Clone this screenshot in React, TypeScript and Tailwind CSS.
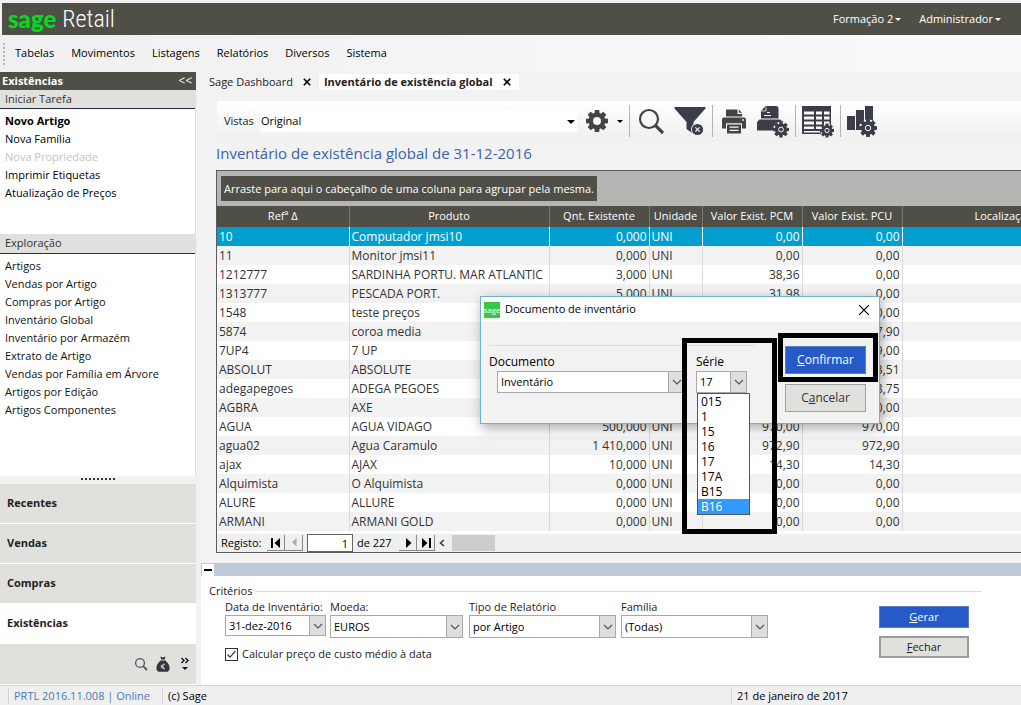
import React, { useState } from 'react';

type Linha = {
  ref: string;
  produto: string;
  qnt: string;
  pcm: string;
  pcu: string;
};

const menus = ['Tabelas', 'Movimentos', 'Listagens', 'Relatórios', 'Diversos', 'Sistema'];

const tarefas = ['Novo Artigo', 'Nova Família', 'Nova Propriedade', 'Imprimir Etiquetas', 'Atualização de Preços'];

const exploracao = [
  'Artigos',
  'Vendas por Artigo',
  'Compras por Artigo',
  'Inventário Global',
  'Inventário por Armazém',
  'Extrato de Artigo',
  'Vendas por Família em Árvore',
  'Artigos por Edição',
  'Artigos Componentes',
];

const modulos = ['Recentes', 'Vendas', 'Compras', 'Existências'];

const series = ['015', '1', '15', '16', '17', '17A', 'B15', 'B16'];

const linhas: Linha[] = [
  { ref: '10', produto: 'Computador jmsi10', qnt: '0,000', pcm: '0,00', pcu: '0,00' },
  { ref: '11', produto: 'Monitor jmsi11', qnt: '0,000', pcm: '0,00', pcu: '0,00' },
  { ref: '1212777', produto: 'SARDINHA PORTU. MAR ATLANTIC', qnt: '3,000', pcm: '38,36', pcu: '0,00' },
  { ref: '1313777', produto: 'PESCADA PORT.', qnt: '5,000', pcm: '31,98', pcu: '0,00' },
  { ref: '1548', produto: 'teste preços', qnt: '0,000', pcm: '0,00', pcu: '0,00' },
  { ref: '5874', produto: 'coroa media', qnt: '10,000', pcm: '7,90', pcu: '7,90' },
  { ref: '7UP4', produto: '7 UP', qnt: '10,000', pcm: '9,00', pcu: '9,00' },
  { ref: 'ABSOLUT', produto: 'ABSOLUTE', qnt: '1,000', pcm: '3,51', pcu: '3,51' },
  { ref: 'adegapegoes', produto: 'ADEGA PEGOES', qnt: '5,000', pcm: '8,75', pcu: '8,75' },
  { ref: 'AGBRA', produto: 'AXE', qnt: '0,000', pcm: '0,00', pcu: '0,00' },
  { ref: 'AGUA', produto: 'AGUA VIDAGO', qnt: '500,000', pcm: '970,00', pcu: '970,00' },
  { ref: 'agua02', produto: 'Agua Caramulo', qnt: '1 410,000', pcm: '972,90', pcu: '972,90' },
  { ref: 'ajax', produto: 'AJAX', qnt: '10,000', pcm: '14,30', pcu: '14,30' },
  { ref: 'Alquimista', produto: 'O Alquimista', qnt: '0,000', pcm: '0,00', pcu: '0,00' },
  { ref: 'ALURE', produto: 'ALLURE', qnt: '0,000', pcm: '0,00', pcu: '0,00' },
  { ref: 'ARMANI', produto: 'ARMANI GOLD', qnt: '0,000', pcm: '0,00', pcu: '0,00' },
];

const dentes = [0, 45, 90, 135, 180, 225, 270, 315];

// Roda dentada de 8 dentes
const Gear = ({ cx, cy, r, hole, fill, edge }: { cx: number; cy: number; r: number; hole: string; fill: string; edge?: string }) => (
  <g transform={`translate(${cx} ${cy})`}>
    {edge && <circle r={r * 0.98} fill={edge} />}
    {dentes.map((a) => (
      <path key={a} d="M-2.6 -7 L-2.2 -11 H2.2 L2.6 -7 Z" transform={`rotate(${a}) scale(${r / 11})`} fill={fill} />
    ))}
    <circle r={r * 0.76} fill={fill} />
    {edge ? <circle r={r * 0.3} fill="none" stroke={hole} strokeWidth="1" /> : <circle r={r * 0.36} fill={hole} />}
  </g>
);

const Caret = ({ className }: { className?: string }) => (
  <svg viewBox="0 0 8 4" className={className} fill="currentColor"><path d="M0 0H8L4 4Z" /></svg>
);

const Fechar = ({ className }: { className?: string }) => (
  <svg viewBox="0 0 10 10" className={className} stroke="currentColor" fill="none"><path d="M1 1L9 9M9 1L1 9" /></svg>
);

const Combo = ({ id, value, className }: { id: string; value: string; className: string }) => (
  <div className={`relative border border-[#a8a8a8] bg-white ${className}`}>
    <select id={id} className="block h-full w-full appearance-none bg-transparent pr-4 pl-[3px] text-[11px] text-black outline-none">
      <option>{value}</option>
    </select>
    <span className="pointer-events-none absolute inset-y-0 right-0 flex w-4 items-center justify-center border-l border-[#a8a8a8] bg-[#dedede]">
      <svg viewBox="0 0 10 6" className="w-2.5" fill="none" stroke="#555" strokeWidth="1.2"><path d="M1 1L5 5L9 1" /></svg>
    </span>
  </div>
);

const Separador = () => <span className="h-8 w-px bg-[#b4b4b4]" />;

const Sidebar = () => (
  <aside className="flex w-[196px] shrink-0 flex-col bg-white">
    <div className="flex h-[18px] items-center justify-between bg-[#504f47] px-0.5 font-bold text-white">
      <h2>Existências</h2>
      <button type="button" aria-label="Recolher" className="pr-0.5 text-xs font-normal">&lt;&lt;</button>
    </div>
    <div className="flex grow flex-col border-r border-[#dcdcdc]">
      <h3 className="flex h-[19px] items-center border-b border-[#1f2a44] bg-[#e0e0dd] px-[5px] text-[#333]">Iniciar Tarefa</h3>
      <ul className="px-[5px] pt-[3px] pb-8">
        {tarefas.map((t, i) => (
          <li key={t}>
            <a href="#" className={`block leading-[18px] ${i === 0 ? 'font-bold' : ''} ${i === 2 ? 'text-[#c4c4c4]' : 'text-black'}`}>{t}</a>
          </li>
        ))}
      </ul>
      <h3 className="flex h-5 items-center border-b border-[#1f3270] bg-[#e0e0dd] px-[5px] text-[#333]">Exploração</h3>
      <ul className="px-[5px] pt-[3px]">
        {exploracao.map((t) => (
          <li key={t}>
            <a href="#" className="block leading-[18px] text-[#111]">{t}</a>
          </li>
        ))}
      </ul>
    </div>
    <div className="flex h-2 justify-center bg-[#f2f2f2] pt-0.5">
      <span className="h-0.5 w-[35px] bg-[repeating-linear-gradient(90deg,#333_0_2px,transparent_2px_4px)]" />
    </div>
    <nav className="flex flex-col">
      {modulos.map((m) => (
        <button
          key={m}
          type="button"
          className={`h-10 border-b border-white px-[7px] text-left font-bold text-[#222] ${m === 'Existências' ? 'bg-white' : 'bg-[#e0e0dd]'}`}
        >
          {m}
        </button>
      ))}
    </nav>
    <div className="flex h-[41px] items-center justify-end gap-2 border-b border-white bg-[#e0e0dd] pr-1.5">
      <svg viewBox="0 0 14 14" className="w-3.5" fill="none" stroke="#555" strokeWidth="1.3"><circle cx="6" cy="6" r="4.4" /><path d="M9.2 9.2L13 13" strokeWidth="1.8" /></svg>
      <svg viewBox="0 0 14 16" className="w-3.5" fill="#33343f">
        <path d="M4.5 0.5L7 1.5L9.5 0.5L8.8 3.6H5.2Z" />
        <path d="M4.8 4.6H9.2C11 6 13.6 9 13.6 12C13.6 15 12 15.8 10 15.8H4C2 15.8 0.4 15 0.4 12C0.4 9 3 6 4.8 4.6Z" />
        <path d="M9 8.4C7.6 7.6 5.8 8.4 5.8 10.5C5.8 12.6 7.6 13.4 9 12.6M4.8 9.9H8M4.8 11.2H8" fill="none" stroke="#e0e0dd" strokeWidth="0.9" />
      </svg>
      <svg viewBox="0 0 10 14" className="ml-0.5 w-2.5" fill="none" stroke="#111" strokeWidth="1.4"><path d="M1.5 1L4 3.5L1.5 6M5.5 1L8 3.5L5.5 6" /><path d="M2 10H8L5 13Z" fill="#111" stroke="none" /></svg>
    </div>
  </aside>
);

const Toolbar = () => (
  <div className="ml-4 flex h-10 items-center bg-linear-to-b from-white to-[#efefef] pl-[7px] text-[#3a3c47]">
    <label htmlFor="vistas" className="w-9 shrink-0 text-[#222]">Vistas</label>
    <div className="relative w-[317px]">
      <select id="vistas" className="block h-[22px] w-full appearance-none bg-white pl-px text-[11px] text-black outline-none">
        <option>Original</option>
      </select>
      <Caret className="pointer-events-none absolute top-2.5 right-0.5 w-2 text-black" />
    </div>
    <button type="button" aria-label="Opções" className="ml-2 flex items-center gap-2">
      <svg viewBox="0 0 24 24" className="w-6"><Gear cx={12} cy={12} r={11} hole="#f8f8f8" fill="#444" /></svg>
      <Caret className="w-1.5 text-black" />
    </button>
    <div className="ml-1.5 flex items-center gap-1.5">
      <Separador />
      <div className="flex items-center gap-2.5">
        <button type="button" aria-label="Pesquisar">
          <svg viewBox="0 0 28 32" className="h-8 w-7" fill="none" stroke="#444"><circle cx="13" cy="14" r="9" strokeWidth="2.2" /><path d="M19.6 20.6L27 28" strokeWidth="3.2" /></svg>
        </button>
        <button type="button" aria-label="Limpar filtro">
          <svg viewBox="0 0 32 32" className="w-8">
            <path d="M0.5 2H31.5V3.5L19.5 17V29L12.5 24V17L0.5 3.5Z" fill="#3b3d49" />
            <circle cx="23.5" cy="24.5" r="6.5" fill="#f6f6f6" />
            <circle cx="23.5" cy="24.5" r="5.6" fill="#3b3d49" />
            <path d="M21.4 22.4L25.6 26.6M25.6 22.4L21.4 26.6" stroke="#f6f6f6" strokeWidth="1.2" />
          </svg>
        </button>
      </div>
      <Separador />
      <div className="flex items-center gap-2.5">
        <button type="button" aria-label="Imprimir">
          <svg viewBox="-2 0 28 32" className="h-8 w-7" fill="#444">
            <path d="M5 4.5H16.5V9H21V11.5H5Z" /><path d="M17.8 4.5L21 7.7H17.8Z" />
            <path d="M3 12.6H23Q25 12.6 25 14.6V23.5H21V18.2H5V23.5H1V14.6Q1 12.6 3 12.6Z" />
            <circle cx="22" cy="15" r="0.9" fill="#f6f6f6" />
            <path d="M6 19.5H20V28.5H6Z" /><path d="M8.5 22.2H17.5M8.5 25.4H17.5" stroke="#f6f6f6" strokeWidth="1.2" />
          </svg>
        </button>
        <button type="button" aria-label="Configurar impressão">
          <svg viewBox="0 0 32 34" className="h-[34px] w-8" fill="#3b3d49">
            <path d="M8.5 2H19Q21.5 2 21.5 5V14.5H4V7Z" />
            <path d="M4.5 7H9V2.5" fill="none" stroke="#f6f6f6" strokeWidth="0.8" />
            <path d="M10 8.5H13M7 11.5H14" stroke="#f6f6f6" strokeWidth="1.2" />
            <path d="M2.5 15.5H23L26.5 18V26.5H0V18Z" />
            <Gear cx={24} cy={25.5} r={8} fill="#3b3d49" hole="#f6f6f6" edge="#f6f6f6" />
          </svg>
        </button>
      </div>
      <Separador />
      <button type="button" aria-label="Configurar grelha">
        <svg viewBox="0 0 32 34" className="h-[34px] w-8">
          <path d="M0 2H29V30H0Z" fill="#3b3d49" />
          <path d="M2 7.5H12V10.5H2ZM14 7.5H20V10.5H14ZM22 7.5H27.5V10.5H22ZM2 12.5H12V15.5H2ZM14 12.5H20V15.5H14ZM22 12.5H27.5V15.5H22ZM2 17.5H12V20.5H2ZM14 17.5H20V20.5H14ZM22 17.5H27.5V20.5H22ZM2 22.5H12V25H2ZM14 22.5H20V25H14ZM2 27H18V28.5H2Z" fill="#fafafa" />
          <Gear cx={25} cy={26.5} r={7} fill="#3b3d49" hole="#f6f6f6" edge="#f6f6f6" />
        </svg>
      </button>
      <Separador />
      <button type="button" aria-label="Configurar gráfico">
        <svg viewBox="0 0 32 34" className="h-[34px] w-8" fill="#3b3d49">
          <path d="M0 12H8V26H0ZM9 6H17V26H9ZM18 2H26V26H18Z" />
          <Gear cx={21} cy={24} r={9} fill="#3b3d49" hole="#f6f6f6" edge="#f6f6f6" />
        </svg>
      </button>
    </div>
  </div>
);

const Grelha = ({ selecionada, onSelect }: { selecionada: number; onSelect: (i: number) => void }) => (
  <div className="ml-[15px] overflow-hidden border-y border-l border-[#5a5a5a] bg-white">
    <div className="flex h-[35px] items-center bg-[#b5b5b3] px-1">
      <p className="bg-[#504f47] px-[3px] leading-[25px] text-white">
        Arraste para aqui o cabeçalho de uma coluna para agrupar pela mesma.
      </p>
    </div>
    <table className="w-full min-w-[889px] table-fixed border-collapse">
      <colgroup>
        <col className="w-[132px]" />
        <col className="w-[200px]" />
        <col className="w-[100px]" />
        <col className="w-[53px]" />
        <col className="w-[100px]" />
        <col className="w-[100px]" />
        <col />
      </colgroup>
      <thead>
        <tr className="h-[21px] bg-[#504f47] text-white *:border-r *:border-[#77766e] *:p-0 *:font-normal">
          <th>Refª Δ</th>
          <th>Produto</th>
          <th>Qnt. Existente</th>
          <th>Unidade</th>
          <th>Valor Exist. PCM</th>
          <th>Valor Exist. PCU</th>
          <th>Localização</th>
        </tr>
      </thead>
      <tbody className="text-xs">
        {linhas.map((l, i) => (
          <tr
            key={l.ref}
            onClick={() => onSelect(i)}
            className={`h-[19px] *:border-r *:px-0.5 *:py-0 *:leading-[18px] *:whitespace-nowrap ${
              i === selecionada ? 'bg-[#009fcf] text-white *:border-white' : 'text-[#333] even:bg-[#f2f2f2] *:border-[#dadada]'
            }`}
          >
            <td>{l.ref}</td>
            <td>{l.produto}</td>
            <td className="text-right">{l.qnt}</td>
            <td>UNI</td>
            <td className="text-right">{l.pcm}</td>
            <td className="text-right">{l.pcu}</td>
            <td></td>
          </tr>
        ))}
      </tbody>
    </table>
    <div className="mt-[3px] flex h-[18px] items-center bg-[#efefef] pl-1 text-black">
      <label htmlFor="registo" className="w-[46px]">Registo:</label>
      <button type="button" aria-label="Primeiro" className="flex h-4 w-[18px] items-center justify-center border-r border-b border-[#888]">
        <svg viewBox="0 0 12 10" className="w-3"><path d="M1 0H3V10H1ZM10 0V10L4.5 5Z" /></svg>
      </button>
      <button type="button" aria-label="Anterior" className="flex h-4 w-[18px] items-center justify-center border-r border-b border-[#888]">
        <svg viewBox="0 0 12 10" className="w-2.5" fill="#aaa"><path d="M9 0V10L3.5 5Z" /></svg>
      </button>
      <input id="registo" defaultValue="1" className="ml-1 h-[18px] w-[46px] border border-[#666] bg-white px-1 text-right outline-none" />
      <span className="w-[46px] pl-1">de 227</span>
      <button type="button" aria-label="Seguinte" className="flex h-4 w-[18px] items-center justify-center border-r border-b border-[#888]">
        <svg viewBox="0 0 12 10" className="w-3"><path d="M4 0V10L9.5 5Z" /></svg>
      </button>
      <button type="button" aria-label="Último" className="flex h-4 w-[18px] items-center justify-center border-r border-b border-[#888]">
        <svg viewBox="0 0 12 10" className="w-3"><path d="M9 0H11V10H9ZM2 0V10L7.5 5Z" /></svg>
      </button>
      <svg viewBox="0 0 6 8" className="ml-1 w-1.5" fill="none" stroke="#333" strokeWidth="1.5"><path d="M5 1L1.5 4L5 7" /></svg>
      <span className="ml-[7px] h-4 w-[43px] bg-[#cdcdcd]" />
    </div>
  </div>
);

const Criterios = () => {
  const [calcular, setCalcular] = useState(true);
  return (
    <form className="flex grow flex-col bg-white px-2 pt-[7px] pb-5 leading-4" onSubmit={(e) => e.preventDefault()}>
      <div className="mr-[31px] flex items-center gap-1">
        <h2>Critérios</h2>
        <span className="h-px grow bg-[#dcdcdc]" />
      </div>
      <div className="flex items-start pl-4">
        <div className="flex flex-col items-start gap-2">
          <div className="flex items-start">
            <div className="w-[105px]">
              <label htmlFor="data" className="block whitespace-nowrap">Data de Inventário:</label>
              <Combo id="data" value="31-dez-2016" className="h-[21px] w-[101px]" />
            </div>
            <div className="w-[139px]">
              <label htmlFor="moeda" className="block">Moeda:</label>
              <Combo id="moeda" value="EUROS" className="h-[23px] w-[133px]" />
            </div>
            <div className="w-[152px]">
              <label htmlFor="tipo" className="block">Tipo de Relatório</label>
              <Combo id="tipo" value="por Artigo" className="h-[23px] w-[147px]" />
            </div>
            <div>
              <label htmlFor="familia" className="block">Família</label>
              <Combo id="familia" value="(Todas)" className="h-[23px] w-[147px]" />
            </div>
          </div>
          <label className="flex items-center gap-1">
            <span className="relative flex size-[13px]">
              <input
                type="checkbox"
                checked={calcular}
                onChange={(e) => setCalcular(e.target.checked)}
                className="size-[13px] appearance-none border border-[#333] bg-white"
              />
              {calcular && (
                <svg viewBox="0 0 13 13" className="pointer-events-none absolute inset-0" fill="none" stroke="#333" strokeWidth="1.2"><path d="M2.5 6.5L5 9.2L10.5 3.2" /></svg>
              )}
            </span>
            Calcular preço de custo médio à data
          </label>
        </div>
        <div className="mr-11 ml-auto flex w-[90px] flex-col gap-2 pt-[7px]">
          <button type="submit" className="h-[22px] border border-[#5a7fc0] bg-[#255ac8] text-white"><u>G</u>erar</button>
          <button type="button" className="h-[22px] border-2 border-[#9c9c9a] bg-[#e0e0dd] text-[#222]"><u>F</u>echar</button>
        </div>
      </div>
    </form>
  );
};

const DocumentoDialog = () => {
  const [serie, setSerie] = useState('B16');
  return (
    <div role="dialog" aria-label="Documento de inventário" className="absolute top-[296px] left-[480px] h-32 w-[400px] border border-[#6db3cc] bg-[#f2f2f2] shadow-[2px_4px_12px_rgba(0,0,0,0.35)]">
      <div className="flex h-[25px] items-center bg-white pr-[9px] pl-[3px] text-black">
        <span className="flex size-4 items-center justify-center overflow-hidden bg-[#35c843] text-[8px] leading-none text-white">sage</span>
        <h2 className="pl-[5px]">Documento de inventário</h2>
        <button type="button" aria-label="Fechar" className="ml-auto"><Fechar className="w-3" /></button>
      </div>
      <div className="mx-2 mt-[23px] w-[266px] border-t border-[#dcdcdc]" />
      <div className="flex pt-2 pl-2 text-xs text-black">
        <div className="w-[207px]">
          <label htmlFor="documento" className="block leading-4">Documento</label>
          <Combo id="documento" value="Inventário" className="mt-px ml-2 h-[22px] w-[188px]" />
        </div>
        <div className="w-[51px]">
          <label htmlFor="serie" className="block leading-4">Série</label>
          <Combo id="serie" value="17" className="mt-px h-[22px]" />
        </div>
      </div>
      <ul role="listbox" aria-label="Série" className="absolute top-24 left-[216px] w-[53px] border border-[#555] bg-white text-xs text-black">
        {series.map((s) => (
          <li
            key={s}
            role="option"
            aria-selected={s === serie}
            onClick={() => setSerie(s)}
            className={`px-[3px] leading-[15px] ${s === serie ? 'bg-[#3399ff] text-white' : ''}`}
          >
            {s}
          </li>
        ))}
      </ul>
      <div className="absolute top-[49px] right-[13px] flex w-[81px] flex-col gap-2.5 text-xs">
        <button type="button" className="h-7 border border-[#5a7fc0] bg-[#255ac8] text-white"><u>C</u>onfirmar</button>
        <button type="button" className="h-7 border border-[#a0a09e] bg-[#e0e0dd] text-[#333]">C<u>a</u>ncelar</button>
      </div>
      {/* Realces */}
      <div className="pointer-events-none absolute top-[41px] left-[201px] h-[196px] w-[95px] border-5 border-black" />
      <div className="pointer-events-none absolute top-9 left-[297px] h-[49px] w-[100px] border-5 border-black" />
    </div>
  );
};

const App = () => {
  const [selecionada, setSelecionada] = useState(0);

  return (
    <div className="relative flex min-h-screen flex-col overflow-hidden bg-[#f2f2f2] pt-[3px] font-['Open_Sans','Noto_Sans',sans-serif] text-[11px] text-[#222]">
      <header className="ml-0.5 flex h-8 items-center bg-[#504f47] pr-5 pl-1.5 text-white">
        <h1 className="flex items-center gap-1.5 text-2xl leading-8">
          <span className="font-['Lato',sans-serif] font-black text-[#00dc1e]">sage</span>
          <span className="font-['Roboto_Condensed','Liberation_Sans_Narrow','Lato',sans-serif] font-light">Retail</span>
        </h1>
        <div className="ml-auto flex gap-[18px]">
          <button type="button" className="flex items-center gap-0.5">Formação 2<Caret className="w-1.5" /></button>
          <button type="button" className="flex items-center gap-0.5">Administrador<Caret className="w-1.5" /></button>
        </div>
      </header>

      <nav className="flex h-[37px] items-center bg-linear-to-r from-[#f0f0f0] to-[#fafafa] pl-[3px]">
        <span className="h-[22px] w-0.5 bg-[repeating-linear-gradient(180deg,#b5b5b5_0_2px,transparent_2px_4px)]" />
        <ul className="flex gap-[17px] pl-2.5 text-black">
          {menus.map((m) => (
            <li key={m}><a href="#">{m}</a></li>
          ))}
        </ul>
      </nav>

      <div className="flex grow">
        <Sidebar />
        <main className="ml-[5px] flex min-w-0 grow flex-col">
          <div className="flex h-[29px] items-start pt-0.5 pl-2 leading-4">
            <button type="button">Sage Dashboard</button>
            <button type="button" aria-label="Fechar Sage Dashboard" className="py-1 pr-2 pl-2.5 text-black"><Fechar className="w-2 stroke-2" /></button>
            <div className="flex bg-white pl-[5px] font-bold">
              <button type="button">Inventário de existência global</button>
              <button type="button" aria-label="Fechar Inventário" className="py-1 pr-2 pl-2.5 text-black"><Fechar className="w-2 stroke-2" /></button>
            </div>
          </div>
          <Toolbar />
          <h2 className="pb-[5px] pl-[15px] text-[15px] leading-6 text-[#3a62ad]">Inventário de existência global de 31-12-2016</h2>
          <Grelha selecionada={selecionada} onSelect={setSelecionada} />
          <div className="mt-2.5 flex h-[13px] items-center bg-[#bdcad9] pl-px">
            <button type="button" aria-label="Recolher critérios" className="flex h-3 w-3 items-center justify-center bg-white">
              <span className="h-0.5 w-2 bg-black" />
            </button>
          </div>
          <Criterios />
        </main>
      </div>

      <footer className="flex h-5 items-center border-t border-[#d4d4d4] bg-[#efefef] pl-2 leading-4 whitespace-nowrap">
        <span className="w-[154px] border-l border-[#d4d4d4] pl-[5px] text-[#4a7bb5]">PRTL 2016.11.008 | Online</span>
        <span className="border-l border-[#d4d4d4] pl-[5px] text-black">(c) Sage</span>
        <span className="ml-auto w-[290px] border-l border-[#d4d4d4] pl-[5px] text-black">21 de janeiro de 2017</span>
      </footer>

      <DocumentoDialog />
    </div>
  );
};

export default App;
